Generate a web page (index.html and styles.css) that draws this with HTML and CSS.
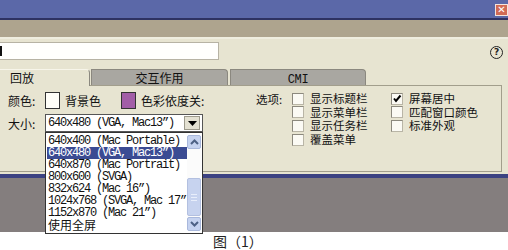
FILE: index.html
```html
<!DOCTYPE html>
<html>
<head>
<meta charset="utf-8">
<link rel="stylesheet" href="styles.css">
</head>
<body>
<div class="screen">
  <div class="titlebar"><div class="close">✕</div></div>
  <div class="menuband"></div>
  <div class="main">
    <div class="toprow">
      <div class="textbox"><span class="caret"></span></div>
      <div class="help">?</div>
    </div>
    <div class="tabs">
      <div class="tab active">回放</div>
      <div class="tab t2">交互作用</div>
      <div class="tab t3"><span class="mono">CMI</span></div>
    </div>
    <div class="panel">
      <div class="leftcol">
        <div class="row r1">
          <span class="label">颜色:</span>
          <span class="swatch white"></span>
          <span class="txt">背景色</span>
          <span class="swatch purple"></span>
          <span class="txt">色彩依度关:</span>
        </div>
        <div class="row r2">
          <span class="label">大小:</span>
          <div class="select">
            <span class="mono">640x480 (VGA, Mac13”)</span>
            <span class="arrowbtn"><svg width="9" height="5" viewBox="0 0 9 5"><path d="M0 0H9L4.5 5Z" fill="#000"/></svg></span>
          </div>
        </div>
      </div>
      <div class="options">
        <span class="label olabel">选项:</span>
        <div class="ocol">
          <div class="opt"><span class="cb"></span>显示标题栏</div>
          <div class="opt"><span class="cb"></span>显示菜单栏</div>
          <div class="opt"><span class="cb"></span>显示任务栏</div>
          <div class="opt"><span class="cb"></span>覆盖菜单</div>
        </div>
        <div class="ocol c2">
          <div class="opt"><span class="cb checked"><svg width="10" height="10" viewBox="0 0 10 10"><path d="M2 4.5L4 7L8.5 1.5" stroke="#000" stroke-width="2" fill="none"/></svg></span>屏幕居中</div>
          <div class="opt"><span class="cb"></span>匹配窗口颜色</div>
          <div class="opt"><span class="cb"></span>标准外观</div>
        </div>
      </div>
    </div>
    <div class="gap"></div>
    <div class="blueline"></div>
    <div class="darkarea"></div>
    <div class="caption">图（1）</div>

    <div class="dropdown">
      <ul class="items">
        <li class="mono">640x400 (Mac Portable)</li>
        <li class="mono sel">640x480 (VGA, Mac13”)</li>
        <li class="mono">640x870 (Mac Portrait)</li>
        <li class="mono">800x600 (SVGA)</li>
        <li class="mono">832x624 (Mac 16”)</li>
        <li class="mono">1024x768 (SVGA, Mac 17”</li>
        <li class="mono">1152x870 (Mac 21”)</li>
        <li>使用全屏</li>
      </ul>
      <div class="scrollbar">
        <div class="sbtn"><svg width="9" height="6" viewBox="0 0 9 6"><path d="M1 5L4.5 1.5L8 5" stroke="#4d6185" stroke-width="2" fill="none"/></svg></div>
        <div class="track"><div class="thumb"><span></span><span></span><span></span></div></div>
        <div class="sbtn"><svg width="9" height="6" viewBox="0 0 9 6"><path d="M1 1L4.5 4.5L8 1" stroke="#4d6185" stroke-width="2" fill="none"/></svg></div>
      </div>
    </div>
  </div>
</div>
</body>
</html>
```
FILE: styles.css
```css
* { box-sizing: border-box; margin: 0; padding: 0; }
html, body { width: 508px; height: 250px; overflow: hidden; background: #fff; }
body { font-family: "Noto Sans CJK SC", "DejaVu Sans", sans-serif; font-size: 12px; color: #111; }
.screen { width: 508px; height: 250px; display: flex; flex-direction: column; }
.titlebar { height: 20px; background: #5b68a8; border-bottom: 2px solid #2e3262; display: flex; justify-content: flex-end; padding-top: 4px; }
.close { width: 13px; height: 12px; background: #d06a55; border: 1px solid #f4e4dc; color: #fff; font-size: 10px; line-height: 10px; text-align: center; font-weight: bold; font-family: "DejaVu Sans", sans-serif; }
.menuband { height: 18px; background: #aea48e; }
.main { position: relative; flex: 1; background: #e7e4d1; border-top: 2px solid #efeddf; display: flex; flex-direction: column; }
.toprow { height: 30px; display: flex; align-items: flex-start; justify-content: space-between; padding-top: 3px; padding-right: 5px; }
.textbox { width: 219px; height: 18px; background: #fffffd; border: 1px solid #b7b3a4; border-left: none; padding-top: 3px; }
.caret { display: block; width: 2px; height: 10px; background: #111; }
.help { width: 13px; height: 13px; margin-top: 4px; border: 1.5px solid #222; border-radius: 50%; font-size: 9px; line-height: 10px; text-align: center; font-weight: bold; font-family: "DejaVu Sans", sans-serif; color: #222; }
.tabs { height: 16px; display: flex; align-items: stretch; }
.tab { height: 16px; line-height: 15px; text-align: center; background: #a9a7a1; border: 1px solid #8b887f; border-bottom: none; border-radius: 0 4px 0 0; }
.tab.active { width: 90px; background: #e7e4d1; border-color: #f7f5ea; border-left: none; text-align: left; padding-left: 10px; position: relative; z-index: 1; height: 17px; border-right: 1px solid #8b887f; }
.tab.t2 { width: 137px; margin-left: 1px; }
.tab.t3 { width: 136px; margin-left: 2px; }
.tab.t3 .mono { font-size: 12px; letter-spacing: -0.4px; }
.panel { height: 87px; border-top: 1px solid #a29e8c; border-right: 1px solid #a29e8c; border-bottom: 1px solid #a29e8c; margin-right: 6px; display: flex; padding-left: 8px; }
.leftcol { width: 248px; padding-top: 6px; }
.row { display: flex; align-items: center; }
.r1 { height: 17px; }
.r2 { height: 18px; margin-top: 5px; }
.label { width: 37px; }
.swatch { width: 15px; height: 17px; border: 1px solid #333; }
.swatch.white { background: #fffef8; }
.swatch.purple { background: #a25ea7; margin-left: 20px; }
.txt { margin-left: 5px; }
.select { width: 158px; height: 18px; background: #fff; border: 1px solid #555; display: flex; align-items: center; justify-content: space-between; padding-left: 2px; padding-right: 2px; }
.arrowbtn { width: 16px; height: 14px; background: #e4e1d2; border: 1px solid #9d9a8c; display: flex; align-items: center; justify-content: center; }
.mono { font-family: "Liberation Mono", monospace; font-size: 12px; letter-spacing: -1.2px; }
.options { display: flex; padding-top: 6px; font-size: 11.5px; }
.olabel { width: 36px; line-height: 14px; }
.ocol { width: 99px; }
.opt { height: 13.6px; line-height: 13px; display: flex; align-items: center; white-space: nowrap; }
.cb { width: 12px; height: 12px; flex: none; background: #fbfaf4; border: 1px solid #b9b5a6; border-top-color: #8c897e; border-left-color: #8c897e; margin-right: 6px; display: flex; align-items: center; justify-content: center; }
.gap { height: 2px; }
.blueline { height: 4px; background: #3c4282; }
.darkarea { height: 54px; background: #847e7e; }
.caption { flex: 1; background: #fff; padding-left: 213px; font-size: 14px; line-height: 18px; color: #222; }
.dropdown { position: absolute; left: 45px; top: 93px; width: 158px; height: 102px; background: #fff; border: 1px solid #333; display: flex; z-index: 2; }
.items { list-style: none; flex: 1; padding-top: 2px; padding-left: 1px; }
.items li { height: 12px; line-height: 12px; white-space: nowrap; padding-left: 1px; }
.items li.sel { background: #3b4b93; color: #fff; }
.scrollbar { width: 15px; display: flex; flex-direction: column; padding: 2px 1px 2px 0; }
.sbtn { height: 14px; background: #c6d3f0; border: 1px solid #a9b8dc; border-radius: 2px; display: flex; align-items: center; justify-content: center; }
.track { flex: 1; background: #fbfbfb; display: flex; flex-direction: column; justify-content: flex-end; padding-bottom: 1px; }
.thumb { height: 38px; background: #c7d3ef; border: 1px solid #b3c0e0; border-radius: 2px; display: flex; flex-direction: column; align-items: center; justify-content: center; gap: 2px; }
.thumb span { display: block; width: 6px; height: 1px; background: #e8eefb; }
```
